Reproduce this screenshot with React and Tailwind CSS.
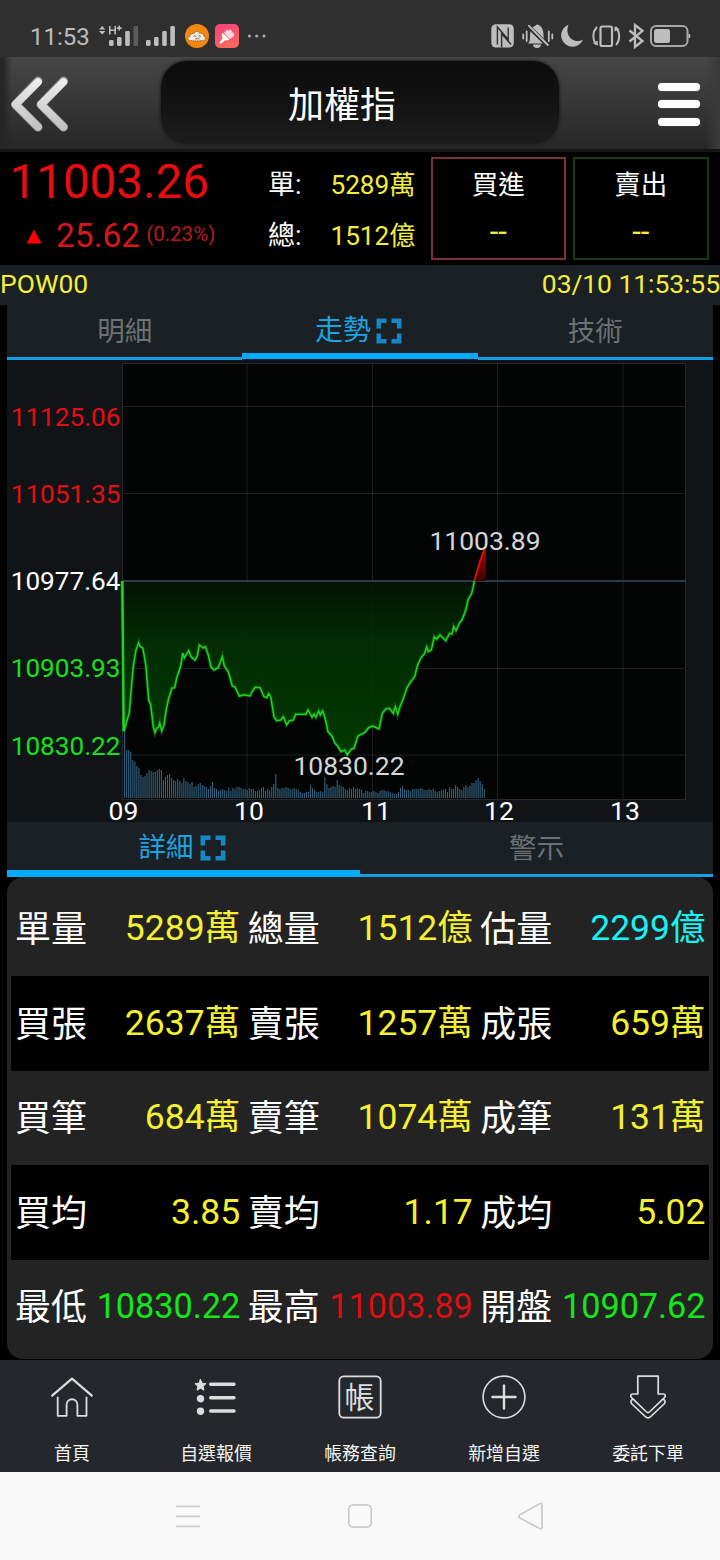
import React from "react";

const LINE = [
  [122, 581], [124, 731.5], [126.5, 722], [129.3, 712.7], [131, 692], [133.3, 666.7], [136, 650], [138.7, 642.7], [140, 646.5], [142.7, 648],
  [144.5, 657], [146, 666.7], [148.7, 700], [150.7, 705], [153.3, 726.7], [155, 732.7], [156.7, 728], [158.3, 727.7], [159.7, 723],
  [161.7, 731], [164, 725], [166, 711], [168.3, 700], [172, 688], [174.7, 687.7], [176.7, 678], [180.7, 666], [182.7, 653],
  [184.3, 658], [188.7, 650.7], [191, 656.7], [195, 660], [197.3, 656], [199.3, 645], [203.3, 648], [205.3, 646.7],
  [208.3, 655], [211, 667], [214, 670], [218.3, 667.7], [222.3, 656.7], [224.3, 666], [228.3, 671.7], [232.3, 686],
  [235, 687], [239.3, 696], [244.3, 694.7], [250, 696], [252, 692], [255, 687.3], [260, 687.7], [264, 696.7], [266.7, 697.7],
  [268.7, 693.7], [270.7, 696.7], [274, 716.7], [276.7, 720.7], [280.7, 720], [283.3, 716.7], [286.7, 725], [289.3, 721],
  [293.3, 720], [295.7, 714.3], [306, 714.3], [308, 710], [312, 717.3], [314, 714], [316, 717.3], [318.7, 711], [320.3, 715],
  [322.7, 711], [325.3, 719], [328, 731.7], [332.3, 736.7], [335, 743.3], [337.7, 746], [341, 751.7], [344.7, 750],
  [347.3, 755], [351, 749.3], [354, 748.3], [358, 736], [365, 732.3], [368.7, 727.7], [372.7, 726], [379, 729],
  [382.3, 713.3], [385.7, 709], [389.3, 708.3], [393.3, 713.3], [395.3, 706.7], [397.7, 714.3], [400, 706.7], [404, 696.7],
  [406.7, 688.3], [410, 682.7], [414.7, 676.7], [417.3, 666], [420.7, 658.3], [424.7, 653.3], [426.7, 647], [428.3, 651.7],
  [431.3, 650], [434.3, 636.7], [436.7, 639.3], [440, 635], [445.7, 640.7], [449.7, 633.3], [452, 634], [453.7, 626.5],
  [456, 630.7], [459.3, 623.3], [462.3, 619.3], [466, 609.3], [468, 600], [471.7, 593.3], [473.3, 586.7], [474.3, 581],
];

const VOLUME = [
  66, 48, 48, 46, 38, 36, 32, 30, 23, 21, 22, 25, 28, 27, 26, 26, 28, 29, 28, 18, 21, 23, 24, 20, 18, 17, 19, 17, 15, 20,
  17, 16, 14, 16, 11, 12, 14, 15, 13, 12, 11, 9, 12, 16, 10, 9, 7, 8, 9, 8, 7, 10, 7, 10, 9, 11, 11, 10, 9, 9, 8, 10,
  9, 9, 7, 7, 8, 10, 11, 7, 9, 8, 11, 14, 24, 10, 9, 10, 10, 11, 10, 9, 9, 10, 9, 8, 6, 5, 5, 6, 6, 13, 10, 8, 6, 6, 7, 6,
  21, 14, 10, 11, 12, 11, 18, 13, 12, 11, 9, 8, 10, 9, 11, 9, 10, 9, 8, 5, 7, 7, 6, 6, 7, 6, 5, 7, 8, 8, 7, 7, 6, 5, 4,
  4, 6, 10, 12, 9, 8, 8, 7, 9, 9, 9, 9, 10, 9, 8, 8, 9, 8, 9, 7, 6, 7, 8, 8, 9, 6, 11, 9, 9, 13, 11, 9, 8, 11, 13, 11,
  12, 15, 15, 18, 20, 17, 14, 9,
];

const PRICES = [
  ["11125.06", 425.5, "#e60d12"],
  ["11051.35", 502.7, "#e60d12"],
  ["10977.64", 590.3, "#ffffff"],
  ["10903.93", 676.7, "#16e01d"],
  ["10830.22", 755, "#16e01d"],
];
const HOURS = [["09", 123.5], ["10", 249], ["11", 376], ["12", 499], ["13", 625]];

const DETAILS = [
  [["單量", "5289萬"], ["總量", "1512億"], ["估量", "2299億", "text-[35.500px] text-[#16f2f2]"]],
  [["買張", "2637萬"], ["賣張", "1257萬"], ["成張", "659萬"]],
  [["買筆", "684萬"], ["賣筆", "1074萬"], ["成筆", "131萬"]],
  [["買均", "3.85"], ["賣均", "1.17"], ["成均", "5.02"]],
  [["最低", "10830.22", "text-[34.200px] text-[#14e61c]"], ["最高", "11003.89", "text-[34.200px] text-[#d90f12]"], ["開盤", "10907.62", "text-[34.200px] text-[#14e61c]"]],
];

function StatusBar() {
  return (
    <div className="flex h-[57px] items-start justify-between bg-[#2f2f2f] pt-6 pr-[29px] pl-[30px]">
      <div className="flex h-6 items-center text-[#bcbcbc]">
        <span className="w-[69px] pt-[2px] text-[24px] leading-6">11:53</span>
        <svg width="76" height="24" viewBox="99 24 76 24" className="block" fill="#bdbdbd">
          <path d="M99 29.5l3.2-3.5 3.2 3.5zM99 31l3.2 3.5 3.2-3.5z" />
          <path d="M109.8 26v8.6M115.2 26v8.6M109.8 30.3h5.4M119.2 25.6v5M116.8 28.1h4.8" stroke="#bdbdbd" strokeWidth="1.6" fill="none" />
          <rect x="109" y="40" width="4.6" height="6" rx="1.4" />
          <rect x="117" y="37" width="4.6" height="9" rx="1.4" />
          <rect x="125.2" y="31" width="4.6" height="15" rx="1.4" />
          <rect x="133.5" y="26" width="4.6" height="20" rx="1.4" fill="#5c5c5c" />
          <rect x="146" y="40" width="4.6" height="6" rx="1.4" />
          <rect x="154" y="37" width="4.6" height="9" rx="1.4" />
          <rect x="162.2" y="31" width="4.6" height="15" rx="1.4" />
          <rect x="170.3" y="26" width="4.6" height="20" rx="1.4" />
        </svg>
        <svg width="24" height="24" viewBox="0 0 24 24" className="ml-[9.5px] block">
          <circle cx="12" cy="12" r="12" fill="#f5860f" />
          <path d="M4.5 16.5c-2.3-.7-1.6-4 .6-4.200.2-2.600 2.400-3.400 3.800-2.500 1-3 5-3 6-.3 2-.8 4 .5 3.700 2.600 2.200.6 2.300 3.800.4 4.400-4.500.6-10 .6-14.500 0z" fill="#f2eadc" stroke="#6b5a3e" strokeWidth=".8" strokeDasharray="1.5 .7" />
          <path d="M8.500 12.500c1-1.200 2.300-.8 2.500.300M13.500 11c1.500 0 2 1.300 1.300 2.500M10 14.800h4.500" stroke="#6b5a3e" strokeWidth=".8" fill="none" />
        </svg>
        <svg width="24" height="24" viewBox="0 0 24 24" className="ml-1.5 block">
          <defs>
            <linearGradient id="brush" x1="0" y1="0" x2="0.3" y2="1">
              <stop offset="0" stopColor="#f5417b" />
              <stop offset="1" stopColor="#fb6660" />
            </linearGradient>
          </defs>
          <rect width="24" height="24" rx="5" fill="url(#brush)" />
          <path d="M12 5.500l2.200 1.300.8-1.800 4.500 5.500-.8 1.800-3.800 2.700-6-6z" fill="#fcd3dc" />
          <path d="M7.500 8.800l6.800 6.500c-1 1.200-2.600 1.400-3.900.8l-4 3.300c-1.400.5-2-.2-1.500-1.400l2.800-4c-1.200-1.600-1.200-3.800-.2-5.200z" fill="#fff" />
        </svg>
        <svg width="20" height="24" viewBox="0 0 20 24" className="ml-2 block" fill="#a9a9a9">
          <circle cx="2.400" cy="12" r="1.600" />
          <circle cx="9.700" cy="12" r="1.600" />
          <circle cx="17" cy="12" r="1.600" />
        </svg>
      </div>
      <svg width="200" height="26" viewBox="491 23 200 26" className="-mt-px block" fill="#bdbdbd">
        <rect x="491.300" y="24.300" width="22.500" height="23.200" rx="4.500" />
        <path d="M497.400 44.500V27L508.200 39.500V27.500M501.600 47.500V33.500L507.600 40.500L511 44.500" fill="none" stroke="#2f2f2f" strokeWidth="1.400" />
        <path d="M528 43.500c1.800-2 2-3.500 2-7.500 0-5.500 2-9 5-10l1.700-1.500c4 .5 6.300 4 6.600 8 .3 6 .9 8 3.700 11zM533 44.500h8a4 3.400 0 0 1-8 0z" />
        <path d="M527.500 25.500l20.500 20" stroke="#2f2f2f" strokeWidth="4.400" />
        <path d="M529 25.800l18.800 19.200" stroke="#bdbdbd" strokeWidth="1.900" strokeLinecap="round" />
        <path d="M523.200 34.500v4M526.700 31.500v9.500M548.800 31.500v9.500M552.300 34.500v4" stroke="#bdbdbd" strokeWidth="1.800" strokeLinecap="round" />
        <path d="M568.500 24.800a11.300 11.300 0 1 0 14.500 14.600c-5 3-11 1.500-13.800-3-2.200-3.600-2.300-8-.7-11.600z" />
        <rect x="600.500" y="26.500" width="11.500" height="19.500" rx="1.800" fill="none" stroke="#bdbdbd" strokeWidth="2.200" />
        <path d="M596.500 27.500c-4 4.500-4.200 11.500-.8 16.500M616 27.500c4 4.500 4.300 12 .5 17" stroke="#bdbdbd" strokeWidth="2" fill="none" strokeLinecap="round" />
        <path d="M592.800 43l5-2.200v5zM619.500 29l-5-2.500v5z" />
        <path d="M629.500 30.500l13 10.500-7.500 6v-22l7.500 5.800-13 10.700" stroke="#bdbdbd" strokeWidth="2.300" fill="none" />
        <rect x="651" y="26" width="36.500" height="20" rx="5" fill="none" stroke="#a8a8a8" strokeWidth="2" />
        <rect x="654" y="29" width="16" height="14" rx="2.500" />
        <path d="M688.500 33.500q2 .5 2 2.500t-2 2.500z" />
      </svg>
    </div>
  );
}

function TitleBar() {
  return (
    <header className="flex h-[95px] justify-between border-b-[3px] border-[#151515] bg-linear-to-b from-[#474747] to-[#272727]">
      <div className="flex w-[161px] items-start bg-linear-to-r from-[#262626] from-[3px] to-transparent to-[12px] pt-[19px] pl-2.5">
        <svg width="60" height="58" viewBox="0 0 60 58" className="block" fill="none" strokeLinecap="round" strokeLinejoin="round">
          <defs>
            <linearGradient id="chev" gradientUnits="userSpaceOnUse" x1="0" y1="2" x2="0" y2="56">
              <stop offset="0" stopColor="#f0f0f0" />
              <stop offset="1" stopColor="#bdbdbd" />
            </linearGradient>
          </defs>
          <path d="M28 5L5.500 28.500L28 51M53.500 5L31 28.500L53.500 51" stroke="#8d8d8d" strokeWidth="9" />
          <path d="M28 6L5.500 28.500L28 51M53.500 6L31 28.500L53.500 51" stroke="url(#chev)" strokeWidth="7.600" />
        </svg>
      </div>
      <h1 className="mt-[4px] flex h-[83px] w-[398px] items-center justify-center rounded-[26px] bg-linear-to-b from-[#0b0b0b] via-[#131313] to-[#1d1d1d] text-[36px] leading-9 text-white shadow-[0_0_3px_1px_#202020]">
        <span className="-translate-x-[18px] translate-y-[3px]">加權指</span>
      </h1>
      <div className="flex w-[161px] justify-end bg-linear-to-l from-[#3a3a3a] from-[2px] to-transparent to-[14px] pt-[25.500px] pr-[20px]">
        <div className="flex h-[43px] w-[42px] flex-col justify-between">
          <i className="block h-2 rounded-full bg-white shadow-[0_0_1px_#aaa]" />
          <i className="block h-2 rounded-full bg-white shadow-[0_0_1px_#aaa]" />
          <i className="block h-2 rounded-full bg-white shadow-[0_0_1px_#aaa]" />
        </div>
      </div>
    </header>
  );
}

function Quote() {
  return (
    <section className="flex h-[113px] bg-black">
      <div className="w-[268px] pl-[9.500px]">
        <div className="pt-[6px] text-[47.500px] leading-[48px] text-[#e60c10]">11003.26</div>
        <div className="flex h-[60px] items-center pl-4 text-[#d8161a]">
          <svg width="16" height="15" viewBox="0 0 16 15" className="block"><path d="M8 .5L15.500 14.500H.5z" fill="#ff0000" /></svg>
          <span className="ml-[14.500px] text-[33.500px] leading-[40px]">25.62</span>
          <span className="-mt-[5px] ml-[6px] text-[20.500px] leading-[30px] text-[#b81a1c]">(0.23%)</span>
        </div>
      </div>
      <div className="flex w-[147.500px] flex-col gap-[11px] pt-[13px] text-[26.200px] leading-10 text-[#f2ee3a]">
        <div className="flex justify-between"><span className="text-[27px] text-white">單:</span><span>5289萬</span></div>
        <div className="flex justify-between"><span className="text-[27px] text-white">總:</span><span>1512億</span></div>
      </div>
      <div className="ml-[15px] flex gap-[7px] pt-[5px] text-center text-[26.500px] leading-10 text-white">
        <div className="h-[103px] w-[135.500px] border-2 border-[#7d3232] pt-1.5">
          買進
          <div className="mt-[7px] text-[31px] text-[#f2ee3a]">--</div>
        </div>
        <div className="h-[103px] w-[135.500px] border-2 border-[#173a12] pt-1.5">
          賣出
          <div className="mt-[7px] text-[31px] text-[#f2ee3a]">--</div>
        </div>
      </div>
    </section>
  );
}

function Expand() {
  return (
    <svg width="26" height="26" viewBox="0 0 26 26" className="block" fill="none" stroke="#1587c4" strokeWidth="4.600">
      <path d="M2.800 10.500V2.800H10.500M15.500 2.800H23.200V10.500M23.200 15.500V23.200H15.500M10.500 23.200H2.800V15.500" />
    </svg>
  );
}

function Chart() {
  const points = LINE.map((p) => p.join(",")).join(" ");
  return (
    <svg width="706" height="462" viewBox="7 360 706 462" className="block overflow-visible" fontFamily="Roboto, sans-serif" fontSize="26.5">
      <defs>
        <linearGradient id="fall" gradientUnits="userSpaceOnUse" x1="0" y1="581" x2="0" y2="755">
          <stop offset="0" stopColor="#021402" />
          <stop offset="0.350" stopColor="#033003" />
          <stop offset="1" stopColor="#003e00" />
        </linearGradient>
        <linearGradient id="rise" gradientUnits="userSpaceOnUse" x1="0" y1="549" x2="0" y2="581">
          <stop offset="0" stopColor="#b50000" />
          <stop offset="1" stopColor="#3a0000" />
        </linearGradient>
      </defs>
      <rect x="7" y="360" width="706" height="462" fill="#101417" />
      <rect x="122.500" y="363.500" width="563" height="436" fill="#030504" stroke="#23282a" />
      <path d="M247 364V799M372.500 364V799M497.500 364V799M623 364V799M123 406.500H685M123 493.500H685M123 668.500H685M123 755H685" stroke="#fff" strokeOpacity=".115" fill="none" />
      <polygon points={`${points} 122,581`} fill="url(#fall)" fillOpacity=".9" />
      {VOLUME.map((h, i) => (
        <rect key={i} x={124.05 + i * 2.0435} y={798 - h} width="1.1" height={h} fill="#35617f" />
      ))}
      <path d="M122.500 581H686" stroke="#293b48" strokeWidth="2" />
      <path d="M474.300 581L479.300 563.300L484 550L486 549V581z" fill="url(#rise)" />
      <path d="M474.300 581L476 575L479.300 563.300L484 550" stroke="#d81414" strokeWidth="1.800" fill="none" />
      <polyline points={points} stroke="#0a7a0a" strokeOpacity=".5" strokeWidth="3.600" fill="none" />
      <polyline points={points} stroke="#22d322" strokeWidth="1.500" fill="none" />
      <path d="M122.500 581L123.500 731" stroke="#22d322" strokeWidth="2.200" />
      {PRICES.map(([t, y, c]) => (
        <text key={t} x="10.700" y={y} fill={c} textLength="109.800" lengthAdjust="spacingAndGlyphs">{t}</text>
      ))}
      {HOURS.map(([t, x]) => (
        <text key={t} x={x} y="820" fill="#fff" textAnchor="middle">{t}</text>
      ))}
      <text x="485" y="550" fill="#d6d6d6" textAnchor="middle">11003.89</text>
      <text x="349" y="775.300" fill="#d6d6d6" textAnchor="middle">10830.22</text>
    </svg>
  );
}

function NavItem({ label, children }) {
  return (
    <div className="flex flex-col items-center pt-[15px]">
      <svg width="44" height="44" viewBox="0 0 44 44" className="block" fill="none" stroke="#dcdddd" strokeWidth="1.800" strokeLinejoin="round" strokeLinecap="round">
        {children}
      </svg>
      <span className="mt-[22.500px] text-[17.900px] leading-6 text-[#f4f4f4]">{label}</span>
    </div>
  );
}

export default function App() {
  return (
    <div className="h-[1560px] w-[720px] overflow-hidden bg-black font-['Roboto','Noto_Sans_CJK_TC',sans-serif]">
      <StatusBar />
      <TitleBar />
      <Quote />
      <div className="flex h-10 items-center justify-between bg-[#1b2025] text-[26.500px] leading-[38px] text-[#f2ee3a]">
        <span className="-mt-0.5">POW00</span>
        <span className="-mt-0.5 tracking-[-0.08px]">03/10 11:53:55</span>
      </div>
      <main className="px-[7px]">
        <div className="grid h-[55px] grid-cols-3 grid-rows-1 bg-[#1b2025] text-[27.500px] leading-10 text-[#6c7174]">
          <div className="border-b-[3px] border-[#14a0e8] pt-[7px] text-center">明細</div>
          <div className="mb-px flex items-start justify-center gap-[5px] border-b-[6px] border-[#02abfb] pr-[3px] pt-[6px] text-[#1ba2e0]">
            <span className="text-[28px]">走勢</span><span className="pt-[7px]"><Expand /></span>
          </div>
          <div className="border-b-[3px] border-[#14a0e8] pt-[7px] text-center">技術</div>
        </div>
        <Chart />
        <div className="grid h-[55px] grid-cols-2 grid-rows-1 bg-[#1b2025] text-[27.500px] leading-10 text-[#6c7174]">
          <div className="flex items-start justify-center gap-[6px] border-b-[7px] border-[#02abfb] pr-[3px] pt-[6px] text-[#1ba2e0]">
            <span>詳細</span><span className="pt-[7px]"><Expand /></span>
          </div>
          <div className="border-b-[3px] border-[#14a0e8] pt-[7px] text-center">警示</div>
        </div>
        <div className="h-[482px] rounded-2xl bg-[#232323] px-1 pt-[4.500px]">
          {DETAILS.map((row, r) => (
            <div key={r} className={r % 2 ? "grid h-[94.500px] grid-cols-3 bg-black" : "grid h-[94.500px] grid-cols-3"}>
              {row.map(([label, value, color]) => (
                <div key={label} className="flex items-center justify-between pr-[3.500px] pl-1">
                  <span className="pt-[3px] text-[36px] leading-[54px] whitespace-nowrap text-white">{label}</span>
                  <span className={`pb-px leading-[54px] whitespace-nowrap ${color || "text-[35.500px] text-[#f5f12e]"}`}>{value}</span>
                </div>
              ))}
            </div>
          ))}
        </div>
      </main>
      <nav className="mt-px grid h-28 grid-cols-5 bg-[#24282c]">
        <NavItem label="首頁">
          <path d="M2.200 20.700L22 3.700L41.800 20.700" strokeWidth="2.200" />
          <path d="M7.700 22.300V40.800H16.600V30C16.600 22.300 27.400 22.300 27.400 30V40.800H36.500V22.300" />
        </NavItem>
        <NavItem label="自選報價">
          <path d="M6.500 4.500l1.700 3.700 3.900.4-2.900 2.700.8 3.900-3.500-2-3.500 2 .8-3.900-2.900-2.700 3.900-.4z" fill="#dcdddd" strokeWidth="1" />
          <circle cx="6.500" cy="23.700" r="2.800" fill="#dcdddd" />
          <circle cx="6.500" cy="36.300" r="2.800" fill="#dcdddd" />
          <path d="M16.700 9.200H40M16.700 22.700H40M16.700 36H40" strokeWidth="3.400" />
        </NavItem>
        <NavItem label="帳務查詢">
          <rect x="1.300" y="1.300" width="41.400" height="41.400" rx="4.500" />
          <text x="21.500" y="33" textAnchor="middle" fontSize="30" fontFamily="Noto Sans CJK TC, sans-serif" fill="#dcdddd" stroke="none">帳</text>
        </NavItem>
        <NavItem label="新增自選">
          <circle cx="22" cy="22" r="20.900" strokeWidth="1.600" />
          <path d="M10.500 22H33.500M22 10.500V33.500" strokeWidth="2.400" />
        </NavItem>
        <NavItem label="委託下單">
          <path d="M11.800 1.200H32.200V19H37.200C39.600 19 39.800 21.200 38.400 22.700L24 36.500C22.600 38 21.400 38 20 36.500L5.600 22.700C4.200 21.200 4.400 19 6.800 19H11.800z" strokeWidth="1.700" />
          <path d="M6.200 24.500C4.400 26 4.600 27.600 6 29L19.200 41.500C21 43.200 23 43.200 24.800 41.500L38 29C39.400 27.600 39.600 26 37.800 24.500" strokeWidth="1.700" />
        </NavItem>
      </nav>
      <footer className="h-[88px] bg-[#f9f9f9] pt-7 pl-[176px]">
        <svg width="368" height="34" viewBox="176 1500 368 34" className="block" fill="none" stroke="#cbcbcb" strokeWidth="1.700" strokeLinejoin="round">
          <path d="M176 1506.300H200M176 1516.300H200M176 1526.300H200" />
          <rect x="348.800" y="1504.800" width="22.400" height="22.400" rx="4.500" />
          <path d="M539.500 1503.700Q542 1502.600 542 1505.200V1527Q542 1529.600 539.500 1528.400L520 1518Q517.500 1516.500 520 1514.800z" />
        </svg>
      </footer>
    </div>
  );
}
